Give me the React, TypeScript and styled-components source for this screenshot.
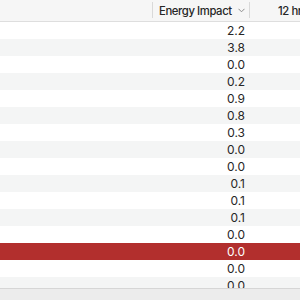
import React from "react";
import styled, { createGlobalStyle } from "styled-components";

const Global = createGlobalStyle`
  html, body { margin: 0; padding: 0; background: #ffffff; }
  body { font-family: Inter, "Liberation Sans", sans-serif; -webkit-font-smoothing: antialiased; }
`;

const Window = styled.div`
  width: 300px;
  height: 300px;
  display: flex;
  flex-direction: column;
  overflow: hidden;
  background: #ffffff;
`;

const Header = styled.div`
  display: grid;
  grid-template-columns: 152px 97px 1fr;
  height: 21px;
  flex: none;
  background: #f6f6f6;
  border-bottom: 1px solid #dedede;
  font-size: 11.3px;
  font-weight: 500;
  letter-spacing: -0.4px;
  color: #262626;
`;

const HeadCell = styled.div<{ $sep?: boolean; $pad?: number }>`
  position: relative;
  display: flex;
  align-items: center;
  padding-left: ${(p) => p.$pad ?? 0}px;
  white-space: nowrap;
  overflow: hidden;
  ${(p) =>
    p.$sep &&
    `&::before { content: ""; position: absolute; left: 0; top: 2px; bottom: 3px; width: 1px; background: #d9d9d9; }`}
`;

const Chevron = styled.svg`
  margin-left: 6px;
  flex: none;
`;

const List = styled.div`
  flex: 1;
  overflow: hidden;
`;

const Row = styled.div<{ $alt: boolean; $sel: boolean }>`
  display: grid;
  grid-template-columns: 152px 93px 1fr;
  height: 17px;
  align-items: center;
  font-size: 12px;
  color: ${(p) => (p.$sel ? "#ffffff" : "#262626")};
  background: ${(p) => (p.$sel ? "#b22f2d" : p.$alt ? "#f4f5f5" : "#ffffff")};
`;

const Value = styled.div`
  grid-column: 2;
  text-align: right;
`;

const Footer = styled.div`
  flex: none;
  height: 11px;
  background: #ececec;
  border-top: 1px solid #d6d6d6;
`;

const values = ["2.2", "3.8", "0.0", "0.2", "0.9", "0.8", "0.3", "0.0", "0.0", "0.1", "0.1", "0.1", "0.0", "0.0", "0.0", "0.0"];

export default function App() {
  return (
    <>
      <Global />
      <Window>
        <Header>
          <HeadCell />
          <HeadCell $sep $pad={7}>
            Energy Impact
            <Chevron width="7" height="5" viewBox="0 0 7 5">
              <path d="M0.5 0.8 L3.5 3.8 L6.5 0.8" fill="none" stroke="#8c8c8c" strokeWidth="1" />
            </Chevron>
          </HeadCell>
          <HeadCell $sep $pad={29}>12 hr Power</HeadCell>
        </Header>
        <List>
          {values.map((v, i) => (
            <Row key={i} $alt={i % 2 === 1} $sel={i === 13}>
              <Value>{v}</Value>
            </Row>
          ))}
        </List>
        <Footer />
      </Window>
    </>
  );
}
